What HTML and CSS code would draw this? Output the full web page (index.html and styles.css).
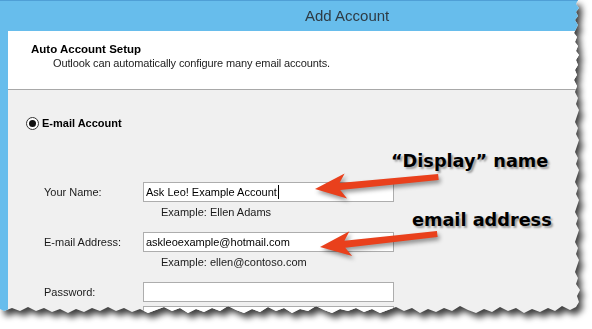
FILE: index.html
```html
<!DOCTYPE html>
<html>
<head>
	<title>Add Account</title>
	<link rel="stylesheet" href="styles.css">
</head>
<body>
	<div class="page">
		<div class="paper">
			<div class="dialog">
				<div class="titlebar">Add Account</div>
				<div class="frame">
					<div class="header">
						<div class="header-title">Auto Account Setup</div>
						<div class="header-sub">Outlook can automatically configure many email accounts.</div>
					</div>
					<div class="content">
						<div class="radio-row"><span class="radio"></span>E-mail Account</div>
						<div class="form">
							<div class="field-label">Your Name:</div>
							<div class="field-input">Ask Leo! Example Account<span class="caret"></span></div>
							<div class="field-hint">Example: Ellen Adams</div>

							<div class="field-label">E-mail Address:</div>
							<div class="field-input">askleoexample@hotmail.com</div>
							<div class="field-hint">Example: ellen@contoso.com</div>

							<div class="field-label">Password:</div>
							<div class="field-input"></div>
							<div class="field-gap"></div>
							<div class="field-label"></div>
							<div class="field-input"></div>
						</div>
					</div>
				</div>
			</div>
		</div>

		<!-- annotations drawn over the screenshot -->
		<svg class="arrows" width="592" height="329" viewBox="0 0 592 329">
			<g transform="translate(315 189) rotate(-5.6)">
				<polygon points="0,0 31,-12.5 25,-3.5 124,-3 124,3 25,3.5 31,12.5"/>
			</g>
			<g transform="translate(320 247) rotate(-6.3)">
				<polygon points="0,0 31,-12.5 25,-3.5 118,-3 118,3 25,3.5 31,12.5"/>
			</g>
		</svg>
		<div class="note note-name">“Display” name</div>
		<div class="note note-email">email address</div>
	</div>
</body>
</html>
```

FILE: styles.css
```css
body {
	margin: 0;
	background: #ffffff;
	font-family: "Liberation Sans", Arial, sans-serif;
	font-size: 11px;
	color: #1a1a1a;
}

.page {
	position: relative;
	width: 592px;
	height: 329px;
	overflow: hidden;
}

/* torn paper look */
.paper {
	filter: drop-shadow(4px 5px 3px rgba(0, 0, 0, 0.75));
}

.dialog {
	width: 592px;
	height: 329px;
	background: #f0f0f0;
	clip-path: polygon(0 0, 578px 0, 576px 4px, 579px 8px, 576px 12px, 578px 16px, 575px 20px, 578px 25px, 576px 29px, 574px 33px, 577px 37px, 575px 42px, 578px 46px, 576px 51px, 579px 55px, 576px 60px, 578px 65px, 575px 70px, 577px 75px, 574px 80px, 577px 86px, 575px 92px, 578px 98px, 576px 104px, 579px 110px, 577px 116px, 575px 122px, 578px 128px, 576px 134px, 579px 140px, 577px 146px, 575px 152px, 578px 158px, 576px 164px, 579px 170px, 577px 176px, 575px 182px, 578px 188px, 576px 194px, 579px 200px, 577px 206px, 575px 212px, 578px 218px, 576px 224px, 579px 230px, 577px 236px, 575px 242px, 578px 248px, 576px 254px, 579px 260px, 577px 266px, 575px 272px, 578px 278px, 576px 284px, 580px 290px, 577px 296px, 579px 302px, 576px 307px, 570px 310px, 562px 306px, 555px 311px, 548px 308px, 540px 312px, 532px 309px, 524px 313px, 516px 308px, 508px 311px, 500px 307px, 492px 312px, 484px 309px, 476px 313px, 468px 310px, 460px 306px, 452px 311px, 444px 308px, 436px 312px, 428px 309px, 420px 313px, 412px 308px, 404px 311px, 396px 307px, 388px 310px, 380px 313px, 372px 309px, 364px 312px, 356px 308px, 348px 311px, 340px 309px, 332px 313px, 324px 310px, 316px 306px, 308px 311px, 300px 309px, 292px 313px, 284px 308px, 276px 311px, 268px 307px, 260px 312px, 252px 309px, 244px 313px, 236px 310px, 228px 306px, 220px 311px, 212px 308px, 204px 312px, 196px 309px, 188px 313px, 180px 308px, 172px 311px, 164px 307px, 156px 310px, 148px 313px, 140px 309px, 132px 312px, 124px 308px, 116px 311px, 108px 307px, 100px 311px, 92px 308px, 84px 312px, 76px 309px, 68px 313px, 60px 309px, 52px 312px, 44px 308px, 36px 311px, 28px 307px, 20px 311px, 12px 308px, 4px 311px, 0 309px);
}

/* Title bar */
.titlebar {
	height: 30px;
	line-height: 30px;
	background: #67bdec;
	border-top: 1px solid #4f9fd6;
	padding-left: 305px;
	font-size: 15px;
	color: #2e3b44;
}

.frame {
	border-left: 8px solid #67bdec;
	height: 298px;
}

/* white header strip */
.header {
	height: 59px;
	background: #ffffff;
	border-bottom: 1px solid #a8a8a8;
	box-sizing: border-box;
	padding-top: 11px;
	padding-left: 23px;
	line-height: 14px;
}

.header-title {
	font-weight: bold;
	font-size: 11.5px;
	color: #000;
}

.header-sub {
	padding-left: 22px;
	letter-spacing: -0.12px;
	color: #222;
}

.content {
	padding-top: 26px;
	padding-left: 18px;
}

.radio-row {
	display: flex;
	align-items: center;
	gap: 3px;
	height: 14px;
	font-weight: bold;
	color: #000;
}

.radio {
	width: 11px;
	height: 11px;
	border: 1px solid #333;
	border-radius: 50%;
	background: #fff;
	display: flex;
	align-items: center;
	justify-content: center;
}

.radio::after {
	content: "";
	width: 7px;
	height: 7px;
	border-radius: 50%;
	background: #111;
}

/* form grid */
.form {
	margin-top: 52px;
	margin-left: 18px;
	display: grid;
	grid-template-columns: 99px 251px;
	align-items: center;
}

.field-label {
	height: 20px;
	line-height: 20px;
}

.field-input {
	height: 20px;
	box-sizing: border-box;
	border: 1px solid #adadad;
	background: #fff;
	padding-left: 2px;
	line-height: 18px;
	display: flex;
	align-items: center;
	color: #000;
	white-space: nowrap;
}

.caret {
	width: 1px;
	height: 14px;
	background: #000;
	margin-left: 1px;
}

.field-hint {
	grid-column: 2;
	height: 30px;
	padding-top: 3px;
	padding-left: 18px;
	box-sizing: border-box;
	line-height: 14px;
}

.field-gap {
	grid-column: 1 / 3;
	height: 4px;
}

/* red annotations */
.arrows {
	position: absolute;
	left: 0;
	top: 0;
	fill: #e9401c;
	filter: drop-shadow(2px 3px 2px rgba(0, 0, 0, 0.4));
}

.note {
	position: absolute;
	font-family: "DejaVu Sans", Verdana, sans-serif;
	font-weight: bold;
	font-size: 17.7px;
	line-height: 20px;
	color: #000;
	text-shadow: 2px 2px 2px rgba(0, 0, 0, 0.35);
	white-space: nowrap;
}

.note-name {
	left: 391px;
	top: 151px;
}

.note-email {
	left: 412px;
	top: 210px;
}
```
